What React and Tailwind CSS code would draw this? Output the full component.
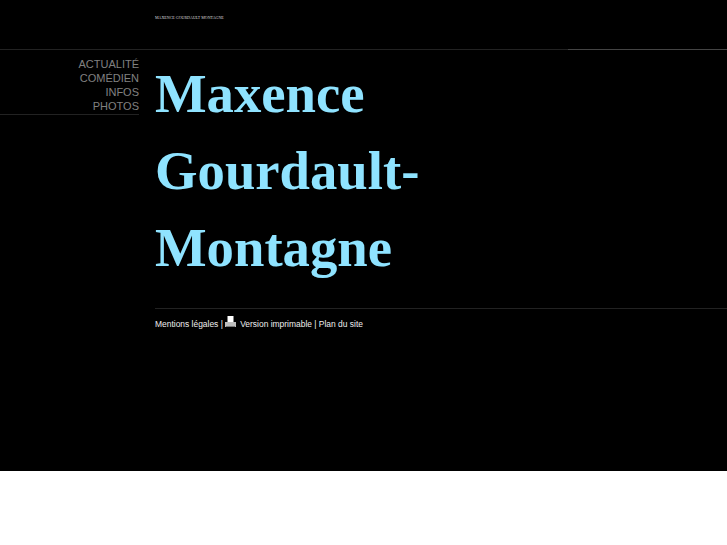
export default function App() {
  return (
    <div className="min-h-[545px] bg-white font-['Liberation_Sans',sans-serif]">
      <div className="h-[471px] bg-black overflow-hidden">
        {/* top bar */}
        <div className="h-[49px] pl-[155px] pt-[15px] font-['Liberation_Serif',serif] text-[4px] leading-[6px] text-[#dddddd]">
          MAXENCE GOURDAULT MONTAGNE
        </div>
        <div className="flex h-px bg-[#222222]">
          <div className="w-[568px]" />
          <div className="flex-1 bg-[#444444]" />
        </div>

        <div className="flex">
          {/* menu */}
          <div className="w-[139px] shrink-0 pt-[7px]">
            <nav className="flex flex-col border-b border-[#222222] pb-px text-right text-[11px] leading-[14px] text-[#808080]">
              <a>ACTUALITÉ</a>
              <a>COMÉDIEN</a>
              <a>INFOS</a>
              <a>PHOTOS</a>
            </nav>
          </div>

          {/* content */}
          <div className="ml-4 flex-1">
            <h1 className="pt-[5px] font-['Liberation_Serif',serif] text-[54.7px] leading-[77px] font-bold text-[#8fe3ff]">
              Maxence
              <br />
              Gourdault-
              <br />
              Montagne
            </h1>
            <div className="mt-[22px] h-px bg-[#222222]" />
            <div className="mt-[7px] flex items-center text-[8.45px] leading-[16px] text-[#eeeeee]">
              <span>Mentions légales |&nbsp;</span>
              <svg width="11" height="12" viewBox="0 0 11 12" className="-mt-1 mr-[4px]">
                <rect x="2.5" y="0" width="6" height="6" fill="#ffffff" />
                <rect x="0" y="6" width="11" height="5" fill="#bdbdbd" />
                <rect x="1" y="10" width="9" height="1" fill="#777777" />
              </svg>
              <span>Version imprimable | Plan du site</span>
            </div>
          </div>
        </div>
      </div>
    </div>
  );
}
